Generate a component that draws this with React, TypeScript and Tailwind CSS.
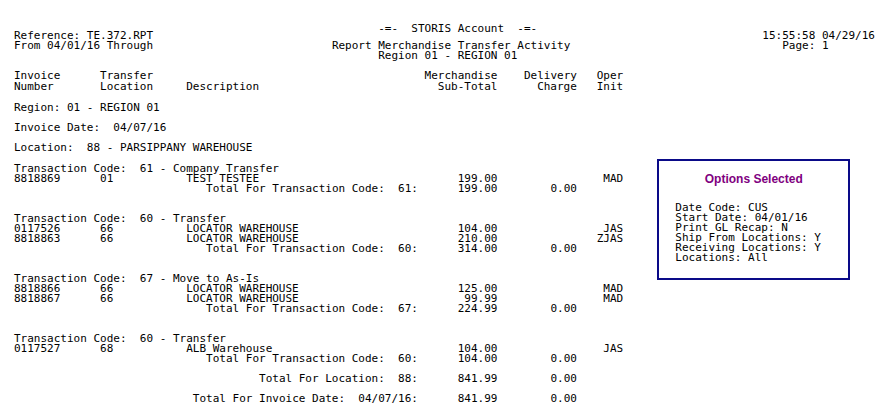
import React from 'react';

type Item = { invoice: string; loc: string; desc: string; merch: string; oper: string };
type Group = { code: string; title: string; items: Item[]; total: string };

const groups: Group[] = [
  {
    code: '61',
    title: 'Company Transfer',
    items: [{ invoice: '8818869', loc: '01', desc: 'TEST TESTEE', merch: '199.00', oper: 'MAD' }],
    total: '199.00',
  },
  {
    code: '60',
    title: 'Transfer',
    items: [
      { invoice: '0117526', loc: '66', desc: 'LOCATOR WAREHOUSE', merch: '104.00', oper: 'JAS' },
      { invoice: '8818863', loc: '66', desc: 'LOCATOR WAREHOUSE', merch: '210.00', oper: 'ZJAS' },
    ],
    total: '314.00',
  },
  {
    code: '67',
    title: 'Move to As-Is',
    items: [
      { invoice: '8818866', loc: '66', desc: 'LOCATOR WAREHOUSE', merch: '125.00', oper: 'MAD' },
      { invoice: '8818867', loc: '66', desc: 'LOCATOR WAREHOUSE', merch: '99.99', oper: 'MAD' },
    ],
    total: '224.99',
  },
  {
    code: '60',
    title: 'Transfer',
    items: [{ invoice: '0117527', loc: '68', desc: 'ALB Warehouse', merch: '104.00', oper: 'JAS' }],
    total: '104.00',
  },
];

const options = [
  'Date Code: CUS',
  'Start Date: 04/01/16',
  'Print GL Recap: N',
  'Ship From Locations: Y',
  'Receiving Locations: Y',
  'Locations: All',
];

const DetailRow: React.FC<{ item: Item }> = ({ item }) => (
  <div className="flex whitespace-pre">
    <span className="w-[13ch]">{item.invoice}</span>
    <span className="w-[13ch]">{item.loc}</span>
    <span className="w-[35ch]">{item.desc}</span>
    <span className="w-[12ch] text-right">{item.merch}</span>
    <span className="w-[12ch]" />
    <span className="w-[7ch] text-right">{item.oper}</span>
  </div>
);

const TotalRow: React.FC<{ label: string; merch: string; delivery: string }> = ({ label, merch, delivery }) => (
  <div className="flex whitespace-pre">
    <span className="w-[61ch] text-right">{label}</span>
    <span className="w-[12ch] text-right">{merch}</span>
    <span className="w-[12ch] text-right">{delivery}</span>
  </div>
);

const OptionsBox: React.FC = () => (
  <div className="ml-[34px] mt-[67px] flex h-[121px] w-[193px] flex-col border-2 border-[#0a0a88] pl-[16px] pt-[11px]">
    <div className="pr-[16px] text-center font-['Liberation_Sans',Arial,sans-serif] text-[12px] font-bold leading-[14px] text-[#800080]">
      Options Selected
    </div>
    <div className="mt-[17px]">
      {options.map((o) => (
        <div key={o} className="whitespace-pre">{o}</div>
      ))}
    </div>
  </div>
);

export default function App() {
  return (
    <div className="h-[419px] w-[890px] overflow-hidden bg-white pl-[14px] pt-[24px] font-['DejaVu_Sans_Mono',monospace] text-[11px] leading-[10px] text-black">
      {/* page heading */}
      <div className="flex whitespace-pre">
        <div className="mt-[7px] w-[48ch]">
          <div>Reference: TE.372.RPT</div>
          <div>From 04/01/16 Through</div>
        </div>
        <div className="w-[65ch]">
          <div className="ml-[7ch]">-=-  STORIS Account  -=-</div>
          <div className="mt-[7px]">Report Merchandise Transfer Activity</div>
          <div className="ml-[7ch]">Region 01 - REGION 01</div>
        </div>
        <div className="mt-[7px]">
          <div>15:55:58 04/29/16</div>
          <div className="ml-[3ch]">Page: 1</div>
        </div>
      </div>

      {/* column heading */}
      <div className="mt-[10px] flex whitespace-pre">
        <div className="w-[13ch]">
          <div>Invoice</div>
          <div className="mt-px">Number</div>
        </div>
        <div className="w-[13ch]">
          <div>Transfer</div>
          <div className="mt-px">Location</div>
        </div>
        <div className="flex w-[35ch] items-end">Description</div>
        <div className="w-[12ch] text-right">
          <div>Merchandise</div>
          <div className="mt-px">Sub-Total</div>
        </div>
        <div className="w-[12ch] text-right">
          <div>Delivery</div>
          <div className="mt-px">Charge</div>
        </div>
        <div className="w-[7ch] text-right">
          <div>Oper</div>
          <div className="mt-px">Init</div>
        </div>
      </div>

      <div className="flex items-start">
        <div className="w-[92ch] whitespace-pre">
          <div className="mt-[11px]">Region: 01 - REGION 01</div>
          <div className="mt-[10px]">Invoice Date:  04/07/16</div>
          <div className="mt-[10px]">Location:  88 - PARSIPPANY WAREHOUSE</div>
          {groups.map((g, i) => (
            <div key={i} className={i === 0 ? 'mt-[11px]' : 'mt-[20px]'}>
              <div>Transaction Code:  {g.code} - {g.title}</div>
              {g.items.map((it) => (
                <DetailRow key={it.invoice} item={it} />
              ))}
              <TotalRow label={`Total For Transaction Code:  ${g.code}:`} merch={g.total} delivery="0.00" />
            </div>
          ))}
          <div className="mt-[10px]">
            <TotalRow label="Total For Location:  88:" merch="841.99" delivery="0.00" />
          </div>
          <div className="mt-[10px]">
            <TotalRow label="Total For Invoice Date:  04/07/16:" merch="841.99" delivery="0.00" />
          </div>
        </div>
        <OptionsBox />
      </div>
    </div>
  );
}
